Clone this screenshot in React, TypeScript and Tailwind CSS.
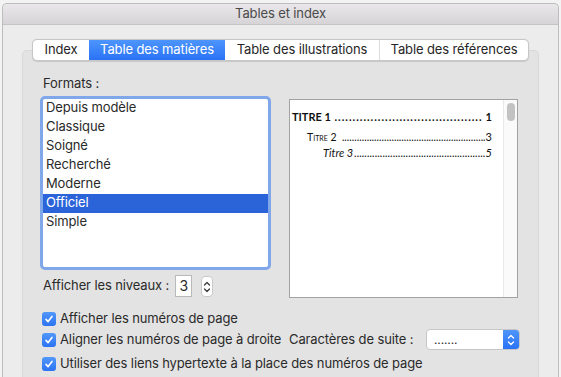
import React from "react";

const formats = ["Depuis modèle", "Classique", "Soigné", "Recherché", "Moderne", "Officiel", "Simple"];

function Check() {
  return (
    <span className="flex h-[14px] w-[14px] shrink-0 items-center justify-center rounded-[3px] bg-gradient-to-b from-[#5197fb] to-[#2b73f2]">
      <svg width="10" height="10" viewBox="0 0 10 10">
        <path d="M2 5.4 L4.1 7.6 L8 2.4" fill="none" stroke="white" strokeWidth="1.6" strokeLinecap="round" strokeLinejoin="round" />
      </svg>
    </span>
  );
}

function UpDown({ color }: { color: string }) {
  return (
    <svg width="8" height="14" viewBox="0 0 8 14">
      <path d="M1.5 5 L4 2.5 L6.5 5" fill="none" stroke={color} strokeWidth="1.3" strokeLinecap="round" strokeLinejoin="round" />
      <path d="M1.5 9 L4 11.5 L6.5 9" fill="none" stroke={color} strokeWidth="1.3" strokeLinecap="round" strokeLinejoin="round" />
    </svg>
  );
}

export default function App() {
  return (
    <div className="h-[377px] w-[561px] overflow-hidden bg-[#f3f3f3] pl-[2px] pt-[3px] font-['Inter','Liberation_Sans',sans-serif] text-[13px] tracking-[-0.12px] text-[#2a2a2a]">
      <div className="flex h-[380px] w-[557px] flex-col rounded-t-[5px] border border-b-0 border-[#bdbdbd] bg-[#ececec]">
        {/* title bar */}
        <div className="flex h-[21px] items-center justify-center rounded-t-[5px] border-b border-[#c4c4c4] bg-gradient-to-b from-[#e9e7e9] to-[#d6d4d6] text-[13px] text-[#4a4a4a]">
          Tables et index
        </div>

        <div className="flex flex-col px-[19px]">
          {/* tabs */}
          <div className="relative z-10 ml-[10px] mt-[14px] flex h-[22px] w-[497px] overflow-hidden rounded-[5px] border border-[#c6c6c6] bg-white text-[13px] text-[#262626] shadow-[0_0.5px_1px_rgba(0,0,0,0.12)]">
            <div className="flex w-[56px] items-center justify-center">Index</div>
            <div className="flex w-[136px] items-center justify-center bg-gradient-to-b from-[#4d95fc] to-[#2a72f5] text-white">Table des matières</div>
            <div className="flex w-[154px] items-center justify-center">Table des illustrations</div>
            <div className="flex flex-1 items-center justify-center border-l border-[#dcdcdc]">Table des références</div>
          </div>

          {/* group box */}
          <div className="-mt-[11px] h-[340px] rounded-t-[5px] border border-b-0 border-[#d9d9d9] bg-[#e3e3e3] pl-[17px] pt-[24px]">
            <div className="flex gap-[18px]">
              <div className="flex w-[231px] flex-col">
                <div className="h-[16px] pl-[3px] leading-[16px]">Formats :</div>
                <div className="mt-[5px] h-[174px] rounded-[5px] border-[3px] border-[#7fa7ea] bg-white">
                  {formats.map((f) => (
                    <div
                      key={f}
                      className={
                        f === "Officiel"
                          ? "flex h-[19px] items-center bg-[#2b63d9] pl-[3px] text-white"
                          : "flex h-[19px] items-center pl-[3px]"
                      }
                    >
                      {f}
                    </div>
                  ))}
                </div>
                <div className="mt-[5px] flex h-[22px] items-center pl-[3px]">
                  <span>Afficher les niveaux :</span>
                  <span className="ml-[6px] flex h-[22px] w-[17px] items-center justify-center border border-[#b9b9b9] bg-white text-[14px]">3</span>
                  <span className="ml-[9px] mt-[2px] flex h-[21px] w-[12px] items-center justify-center rounded-[4px] border border-[#c9c9c9] bg-white">
                    <UpDown color="#3a3a3a" />
                  </span>
                </div>
              </div>

              {/* preview */}
              <div className="mt-[24px] flex h-[199px] w-[229px] shrink-0 border border-[#a2a2a2] bg-white font-['Lato','Open_Sans',sans-serif] tracking-normal text-[#111]">
                <div className="flex w-0 min-w-0 flex-1 flex-col pl-[2px] pr-[11px] pt-[11px]">
                  <div className="flex h-[14px] items-center text-[11px] font-bold">
                    <span className="shrink-0">TITRE 1</span>
                    <span className="mx-[3px] min-w-0 flex-1 overflow-hidden whitespace-nowrap text-right tracking-[1px]">{".".repeat(41)}</span>
                    <span className="shrink-0">1</span>
                  </div>
                  <div className="mt-[6px] flex h-[14px] items-center pl-[15px] text-[10.5px] [font-variant:small-caps]">
                    <span className="shrink-0">Titre 2</span>
                    <span className="min-w-0 flex-1 overflow-hidden whitespace-nowrap text-right">{".".repeat(58)}</span>
                    <span className="shrink-0 text-[11px]">3</span>
                  </div>
                  <div className="mt-[2px] flex h-[14px] items-center pl-[31px] text-[11px] italic">
                    <span className="shrink-0">Titre 3</span>
                    <span className="min-w-0 flex-1 overflow-hidden whitespace-nowrap text-right">{".".repeat(51)}</span>
                    <span className="shrink-0">5</span>
                  </div>
                </div>
                <div className="w-[14px] shrink-0 border-l border-[#e8e8e8] bg-[#fafafa] pl-[3px] pt-[3px]">
                  <div className="h-[18px] w-[8px] rounded-full bg-[#c2c2c2]" />
                </div>
              </div>
            </div>

            {/* options */}
            <div className="mt-[11px] flex flex-col pl-[2px]">
              <div className="flex h-[20px] items-center gap-[4px]">
                <Check />
                <span>Afficher les numéros de page</span>
              </div>
              <div className="flex h-[22px] items-center">
                <div className="flex w-[247px] items-center gap-[4px]">
                  <Check />
                  <span>Aligner les numéros de page à droite</span>
                </div>
                <span>Caractères de suite :</span>
                <div className="ml-auto mr-[18px] flex h-[21px] w-[94px] overflow-hidden rounded-[4px] border border-[#c6c6c6] bg-white">
                  <span className="flex flex-1 items-center pl-[7px] text-[12px] leading-none">.......</span>
                  <span className="flex w-[16px] items-center justify-center bg-gradient-to-b from-[#4f95fb] to-[#2a72f4]">
                    <UpDown color="white" />
                  </span>
                </div>
              </div>
              <div className="mt-[2px] flex h-[22px] items-center gap-[4px]">
                <Check />
                <span>Utiliser des liens hypertexte à la place des numéros de page</span>
              </div>
            </div>
          </div>
        </div>
      </div>
    </div>
  );
}
